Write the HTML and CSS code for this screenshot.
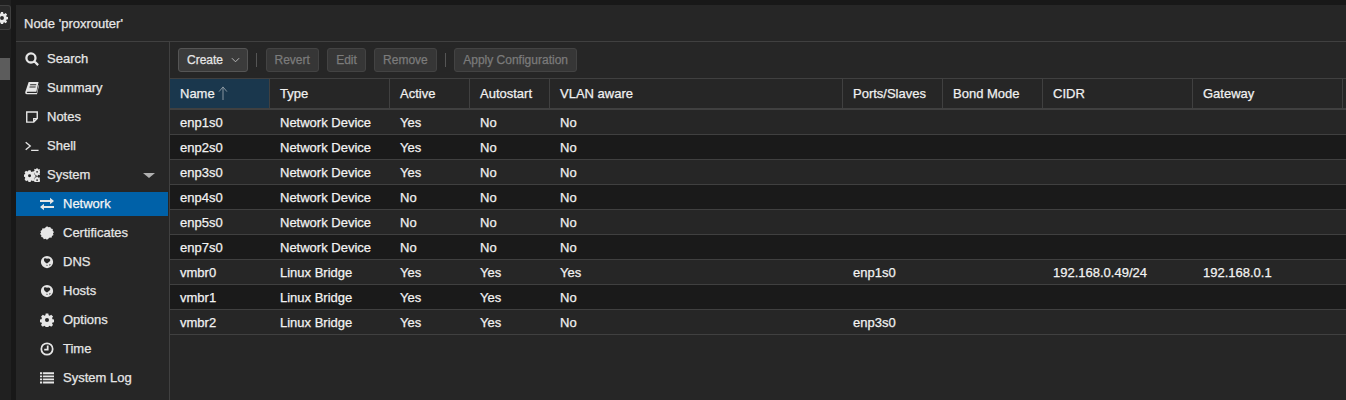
FILE: index.html
```html
<!DOCTYPE html>
<html lang="en">
<head>
<meta charset="utf-8">
<title>Node 'proxrouter'</title>
<link rel="stylesheet" href="styles.css">
</head>
<body>
<div class="app">
  <aside class="rail">
    <div class="rail-btn"><svg class="rail-gear" viewBox="0 0 16 16"><path fill-rule="evenodd" d="M6.600 0h2.800l.4 2.200 1.200.5 1.800-1.300 2 2-1.300 1.800.5 1.200 2.200.4v2.800l-2.200.4-.5 1.200 1.300 1.800-2 2-1.800-1.300-1.200.5-.4 2.200H6.600l-.4-2.200-1.200-.5-1.800 1.300-2-2 1.300-1.800-.5-1.200L-.2 9.400V6.600L2 6.200l.5-1.200-1.300-1.800 2-2L5 2.500l1.200-.5zM8 5.400a2.600 2.600 0 1 0 0 5.200 2.600 2.600 0 0 0 0-5.200z"/></svg></div>
    <div class="rail-selected"></div>
  </aside>
  <main class="panel">
    <header class="panel-title">Node 'proxrouter'</header>
    <div class="panel-body">
      <nav class="menu">
        <div class="item"><svg class="ico" viewBox="0 0 16 16"><path class="st" stroke-width="2.600" d="M6.800 1.600a5.200 5.200 0 1 0 0 10.400 5.200 5.200 0 0 0 0-10.400zM10.600 10.600l4.400 4.400"/></svg>Search</div>
        <div class="item"><svg class="ico" viewBox="0 0 16 16"><path fill-rule="evenodd" d="M4.200 1H15.500L13 12.300H2.800c-1 0-1 1.500 0 1.500H13.400L15.500 4.500l.5.5-2.300 10H2.200C.5 15 0 13.600.4 12.200zM6 3.800l-.3 1.100h7l.3-1.100zM5.300 6.300l-.3 1.100h7l.3-1.100z"/></svg>Summary</div>
        <div class="item"><svg class="ico" viewBox="0 0 16 16"><path class="st" stroke-width="1.600" d="M2 2.300h12v7.500l-4 4H2zM14 9.800h-4v4"/></svg>Notes</div>
        <div class="item"><svg class="ico" viewBox="0 0 16 16"><path class="st" stroke-width="1.500" d="M.8 3.800L6 8 .8 12.200M7 13h8.500"/></svg>Shell</div>
        <div class="item"><svg class="ico ico-wide" viewBox="0 0 18 16"><path fill-rule="evenodd" d="M5 2.600h2.400l.4 1.500 1 .4 1.400-.8 1.700 1.700-.8 1.400.4 1 1.500.4v2.400l-1.500.4-.4 1 .8 1.400-1.700 1.700-1.400-.8-1 .4-.4 1.500H5l-.4-1.500-1-.4-1.400.8L.500 12.800l.8-1.400-.4-1L-.6 10V7.600l1.500-.4.4-1-.8-1.400 1.700-1.700 1.400.8 1-.4zM6.200 7.100a1.700 1.700 0 1 0 0 3.400 1.700 1.700 0 0 0 0-3.400z"/><path fill-rule="evenodd" d="M14.200.2l1.200.1.300.9.800.4.9-.4.800.9-.5.800.3.9.9.3v1.200l-.9.300-.3.900.5.800-.8.900-.9-.4-.8.400-.3.900-1.200-.1-.3-.9-.8-.4-.9.4-.8-.9.500-.8-.3-.9-.9-.3V3.800l.9-.3.3-.9-.5-.8.8-.9.9.4.8-.4zM14.800 3.300a1 1 0 1 0 0 2 1 1 0 0 0 0-2z"/><path fill-rule="evenodd" d="M14.200 9.700l1.200.1.300.9.800.4.9-.4.800.9-.5.800.3.9.9.3v1.200l-.9.300-.3.900.5.800-.8.900-.9-.4-.8.400-.3.900-1.200-.1-.3-.9-.8-.4-.9.4-.8-.9.500-.8-.3-.9-.9-.3v-1.200l.9-.3.3-.9-.5-.8.8-.9.9.4.8-.4zM14.800 12.800a1 1 0 1 0 0 2 1 1 0 0 0 0-2z"/></svg>System<span class="caret"></span></div>
        <div class="item sub active"><svg class="ico" viewBox="0 0 16 16"><path d="M0 3.300h11.500V.8L16 4.500l-4.500 3.700V5.700H0zM16 10.300H4.500V7.800L0 11.500l4.500 3.700v-2.500H16z"/></svg>Network</div>
        <div class="item sub"><svg class="ico" viewBox="0 0 16 16"><path d="M8 .300l1.700 1.200 2-.5.9 1.800 2 .5-.1 2 1.500 1.500-1.200 1.700.7 1.900-1.800.9-.5 2-2-.1L8 15.700l-1.700-1.200-2 .5-.9-1.800-2-.5.100-2L0 9.200l1.200-1.700-.7-1.900 1.800-.9.500-2 2 .1z"/></svg>Certificates</div>
        <div class="item sub"><svg class="ico" viewBox="0 0 16 16"><path fill-rule="evenodd" d="M8 1a7 7 0 1 0 0 14A7 7 0 0 0 8 1zM5.300 3.800c1.200-.5 2 .3 2.800.6.900-.6 2.400-.8 3.200.1.800 1 .5 2.200-.4 3-.8.800-1.900 1.400-2.900 2.300C7 9.300 5.900 8.300 5.100 7.300c-.8-1-.9-2.800.2-3.500zM10.400 11l1.200-.6.500.8-1.100 1zM7.600 11.200l1 .3-.2 1.100-1-.3z"/></svg>DNS</div>
        <div class="item sub"><svg class="ico" viewBox="0 0 16 16"><path fill-rule="evenodd" d="M8 1a7 7 0 1 0 0 14A7 7 0 0 0 8 1zM5.300 3.800c1.200-.5 2 .3 2.800.6.900-.6 2.400-.8 3.200.1.800 1 .5 2.200-.4 3-.8.800-1.900 1.400-2.900 2.300C7 9.300 5.900 8.300 5.100 7.300c-.8-1-.9-2.800.2-3.500zM10.400 11l1.200-.6.500.8-1.100 1zM7.600 11.200l1 .3-.2 1.100-1-.3z"/></svg>Hosts</div>
        <div class="item sub"><svg class="ico" viewBox="0 0 16 16"><path fill-rule="evenodd" d="M6.500.6h3l.4 2 1.200.5 1.700-1.100 2.100 2.100-1.100 1.700.5 1.200 2 .4v3l-2 .4-.5 1.200 1.100 1.700-2.100 2.100-1.700-1.100-1.200.5-.4 2h-3l-.4-2-1.200-.5-1.700 1.100-2.100-2.100 1.100-1.700-.5-1.200-2-.4v-3l2-.4.500-1.200L1.200 4.100l2.100-2.100 1.700 1.100 1.200-.5zM8 5.800a2.300 2.300 0 1 0 0 4.600 2.300 2.300 0 0 0 0-4.600z"/></svg>Options</div>
        <div class="item sub"><svg class="ico" viewBox="0 0 16 16"><path class="st" stroke-width="2" d="M8 1.500a6.500 6.500 0 1 0 0 13 6.500 6.500 0 0 0 0-13zM8.800 4v4.800H4.800"/></svg>Time</div>
        <div class="item sub"><svg class="ico" viewBox="0 0 16 16"><path d="M0 1.500h2.500v2.200H0zM3.500 1.500H16v2.200H3.500zM0 5h2.500v2.200H0zM3.500 5H16v2.200H3.500zM0 8.500h2.500v2.200H0zM3.500 8.500H16v2.200H3.500zM0 12h2.500v2.200H0zM3.500 12H16v2.200H3.500z"/></svg>System Log</div>
      </nav>
      <section class="content">
        <div class="toolbar">
          <button class="btn primary">Create<svg class="chev" viewBox="0 0 10 6"><path d="M1 1l4 4 4-4"/></svg></button>
          <span class="sep"></span>
          <button class="btn">Revert</button>
          <button class="btn">Edit</button>
          <button class="btn">Remove</button>
          <span class="sep"></span>
          <button class="btn">Apply Configuration</button>
        </div>
        <table class="grid">
          <colgroup>
            <col class="c-name"><col class="c-type"><col class="c-small"><col class="c-small"><col class="c-vlan"><col class="c-mid"><col class="c-mid"><col class="c-wide"><col class="c-wide"><col class="c-rest">
          </colgroup>
          <thead>
            <tr><th class="sorted">Name<svg class="sort" viewBox="0 0 10 15"><path d="M5 15V1M.8 6L5 1l4.200 5"/></svg></th><th>Type</th><th>Active</th><th>Autostart</th><th>VLAN aware</th><th>Ports/Slaves</th><th>Bond Mode</th><th>CIDR</th><th>Gateway</th><th></th></tr>
          </thead>
          <tbody>
            <tr><td>enp1s0</td><td>Network Device</td><td>Yes</td><td>No</td><td>No</td><td></td><td></td><td></td><td></td><td></td></tr>
            <tr><td>enp2s0</td><td>Network Device</td><td>Yes</td><td>No</td><td>No</td><td></td><td></td><td></td><td></td><td></td></tr>
            <tr><td>enp3s0</td><td>Network Device</td><td>Yes</td><td>No</td><td>No</td><td></td><td></td><td></td><td></td><td></td></tr>
            <tr><td>enp4s0</td><td>Network Device</td><td>No</td><td>No</td><td>No</td><td></td><td></td><td></td><td></td><td></td></tr>
            <tr><td>enp5s0</td><td>Network Device</td><td>No</td><td>No</td><td>No</td><td></td><td></td><td></td><td></td><td></td></tr>
            <tr><td>enp7s0</td><td>Network Device</td><td>No</td><td>No</td><td>No</td><td></td><td></td><td></td><td></td><td></td></tr>
            <tr><td>vmbr0</td><td>Linux Bridge</td><td>Yes</td><td>Yes</td><td>Yes</td><td>enp1s0</td><td></td><td>192.168.0.49/24</td><td>192.168.0.1</td><td></td></tr>
            <tr><td>vmbr1</td><td>Linux Bridge</td><td>Yes</td><td>Yes</td><td>No</td><td></td><td></td><td></td><td></td><td></td></tr>
            <tr><td>vmbr2</td><td>Linux Bridge</td><td>Yes</td><td>Yes</td><td>No</td><td>enp3s0</td><td></td><td></td><td></td><td></td></tr>
          </tbody>
        </table>
      </section>
    </div>
  </main>
</div>
</body>
</html>
```
FILE: styles.css
```css
* { box-sizing: border-box; }
html, body { margin: 0; height: 100%; overflow: hidden; }
body {
  background: #181818;
  color: #f2f2f2;
  font: 13px/16px "Liberation Sans", Arial, sans-serif;
  -webkit-text-stroke: 0.25px;
}
.app { display: flex; height: 400px; }
.rail {
  width: 11px;
  margin-right: 5px;
  background: #202020;
  flex: none;
}
.rail-btn {
  height: 25px;
  margin-top: 5px;
  background: #2a2a2a;
  border: 1px solid #404040;
  border-left: 0;
  border-radius: 0 3px 3px 0;
  overflow: hidden;
  display: flex;
  align-items: center;
}
.rail-gear { width: 12px; height: 12px; flex: none; margin-left: -4px; fill: #e8e8e8; }
.rail-selected { height: 22px; margin-top: 28px; width: 10px; background: #5c5c5c; }
.panel {
  flex: 1;
  min-width: 0;
  margin-top: 5px;
  background: #262626;
  display: flex;
  flex-direction: column;
}
.panel-title {
  height: 37px;
  padding: 11px 8px 0;
  border-bottom: 1px solid #404040;
  color: #e6e6e6;
  flex: none;
}
.panel-body { flex: 1; display: flex; min-height: 0; }
.menu {
  width: 154px;
  flex: none;
  border-right: 1px solid #404040;
  padding-top: 2px;
}
.item {
  height: 29px;
  display: flex;
  align-items: center;
  padding-left: 9px;
  margin-right: 1px;
  color: #e6e6e6;
  position: relative;
}
.item.sub { padding-left: 24px; }
.item.active { background: #0061a8; color: #f5f5f5; height: 24px; margin: 3px 1px 2px 0; }
.ico { width: 14px; height: 14px; margin-right: 8px; fill: #e6e6e6; flex: none; }
.ico-wide { width: 16px; margin-left: -1px; margin-right: 7px; }
.sub .ico { margin-right: 9px; }
.st { fill: none; stroke: #e6e6e6; }
.caret {
  position: absolute;
  right: 13px;
  top: 13px;
  border-left: 6px solid transparent;
  border-right: 6px solid transparent;
  border-top: 5px solid #b0b0b0;
}
.content { flex: 1; min-width: 0; }
.toolbar {
  height: 37px;
  display: flex;
  align-items: center;
  padding: 0 8px;
  gap: 8.25px;
  border-bottom: 1px solid #404040;
}
.btn {
  height: 24px;
  padding: 0 8px;
  background: #363636;
  border: 1px solid #434343;
  border-radius: 3px;
  font: 12px/16px "Liberation Sans", Arial, sans-serif;
  color: #7b7b7b;
  -webkit-text-stroke: 0.25px;
}
.btn.primary {
  color: #e6e6e6;
  background: #3b3b3b;
  border-color: #555;
  display: flex;
  align-items: center;
}
.chev { width: 9px; height: 6px; margin-left: 8px; margin-right: -1px; fill: none; stroke: #b8b8b8; stroke-width: 1.1; }
.sep { width: 1px; height: 14px; background: #555; }
.grid {
  width: 100%;
  table-layout: fixed;
  border-collapse: separate;
  border-spacing: 0;
}
.c-name { width: 100px; }
.c-type { width: 120px; }
.c-small { width: 80px; }
.c-vlan { width: 293px; }
.c-mid { width: 100px; }
.c-wide { width: 150px; }
.grid th {
  height: 31px;
  padding: 0 10px;
  text-align: left;
  font-weight: normal;
  color: #f0f0f0;
  background: #262626;
  border-right: 1px solid #404040;
  border-bottom: 2px solid #404040;
}
.grid th:last-child { border-right: 0; }
.grid th.sorted { background: #1a374d; }
.sort { width: 10px; height: 14px; margin-left: 3px; vertical-align: -2px; fill: none; stroke: #8f9ba5; stroke-width: 1; }
.grid td {
  height: 25px;
  padding: 1px 10px 0;
  white-space: nowrap;
  border-bottom: 1px solid #404040;
  color: #f2f2f2;
}
.grid tbody tr:nth-child(even) td { background: #1a1a1a; }
```
